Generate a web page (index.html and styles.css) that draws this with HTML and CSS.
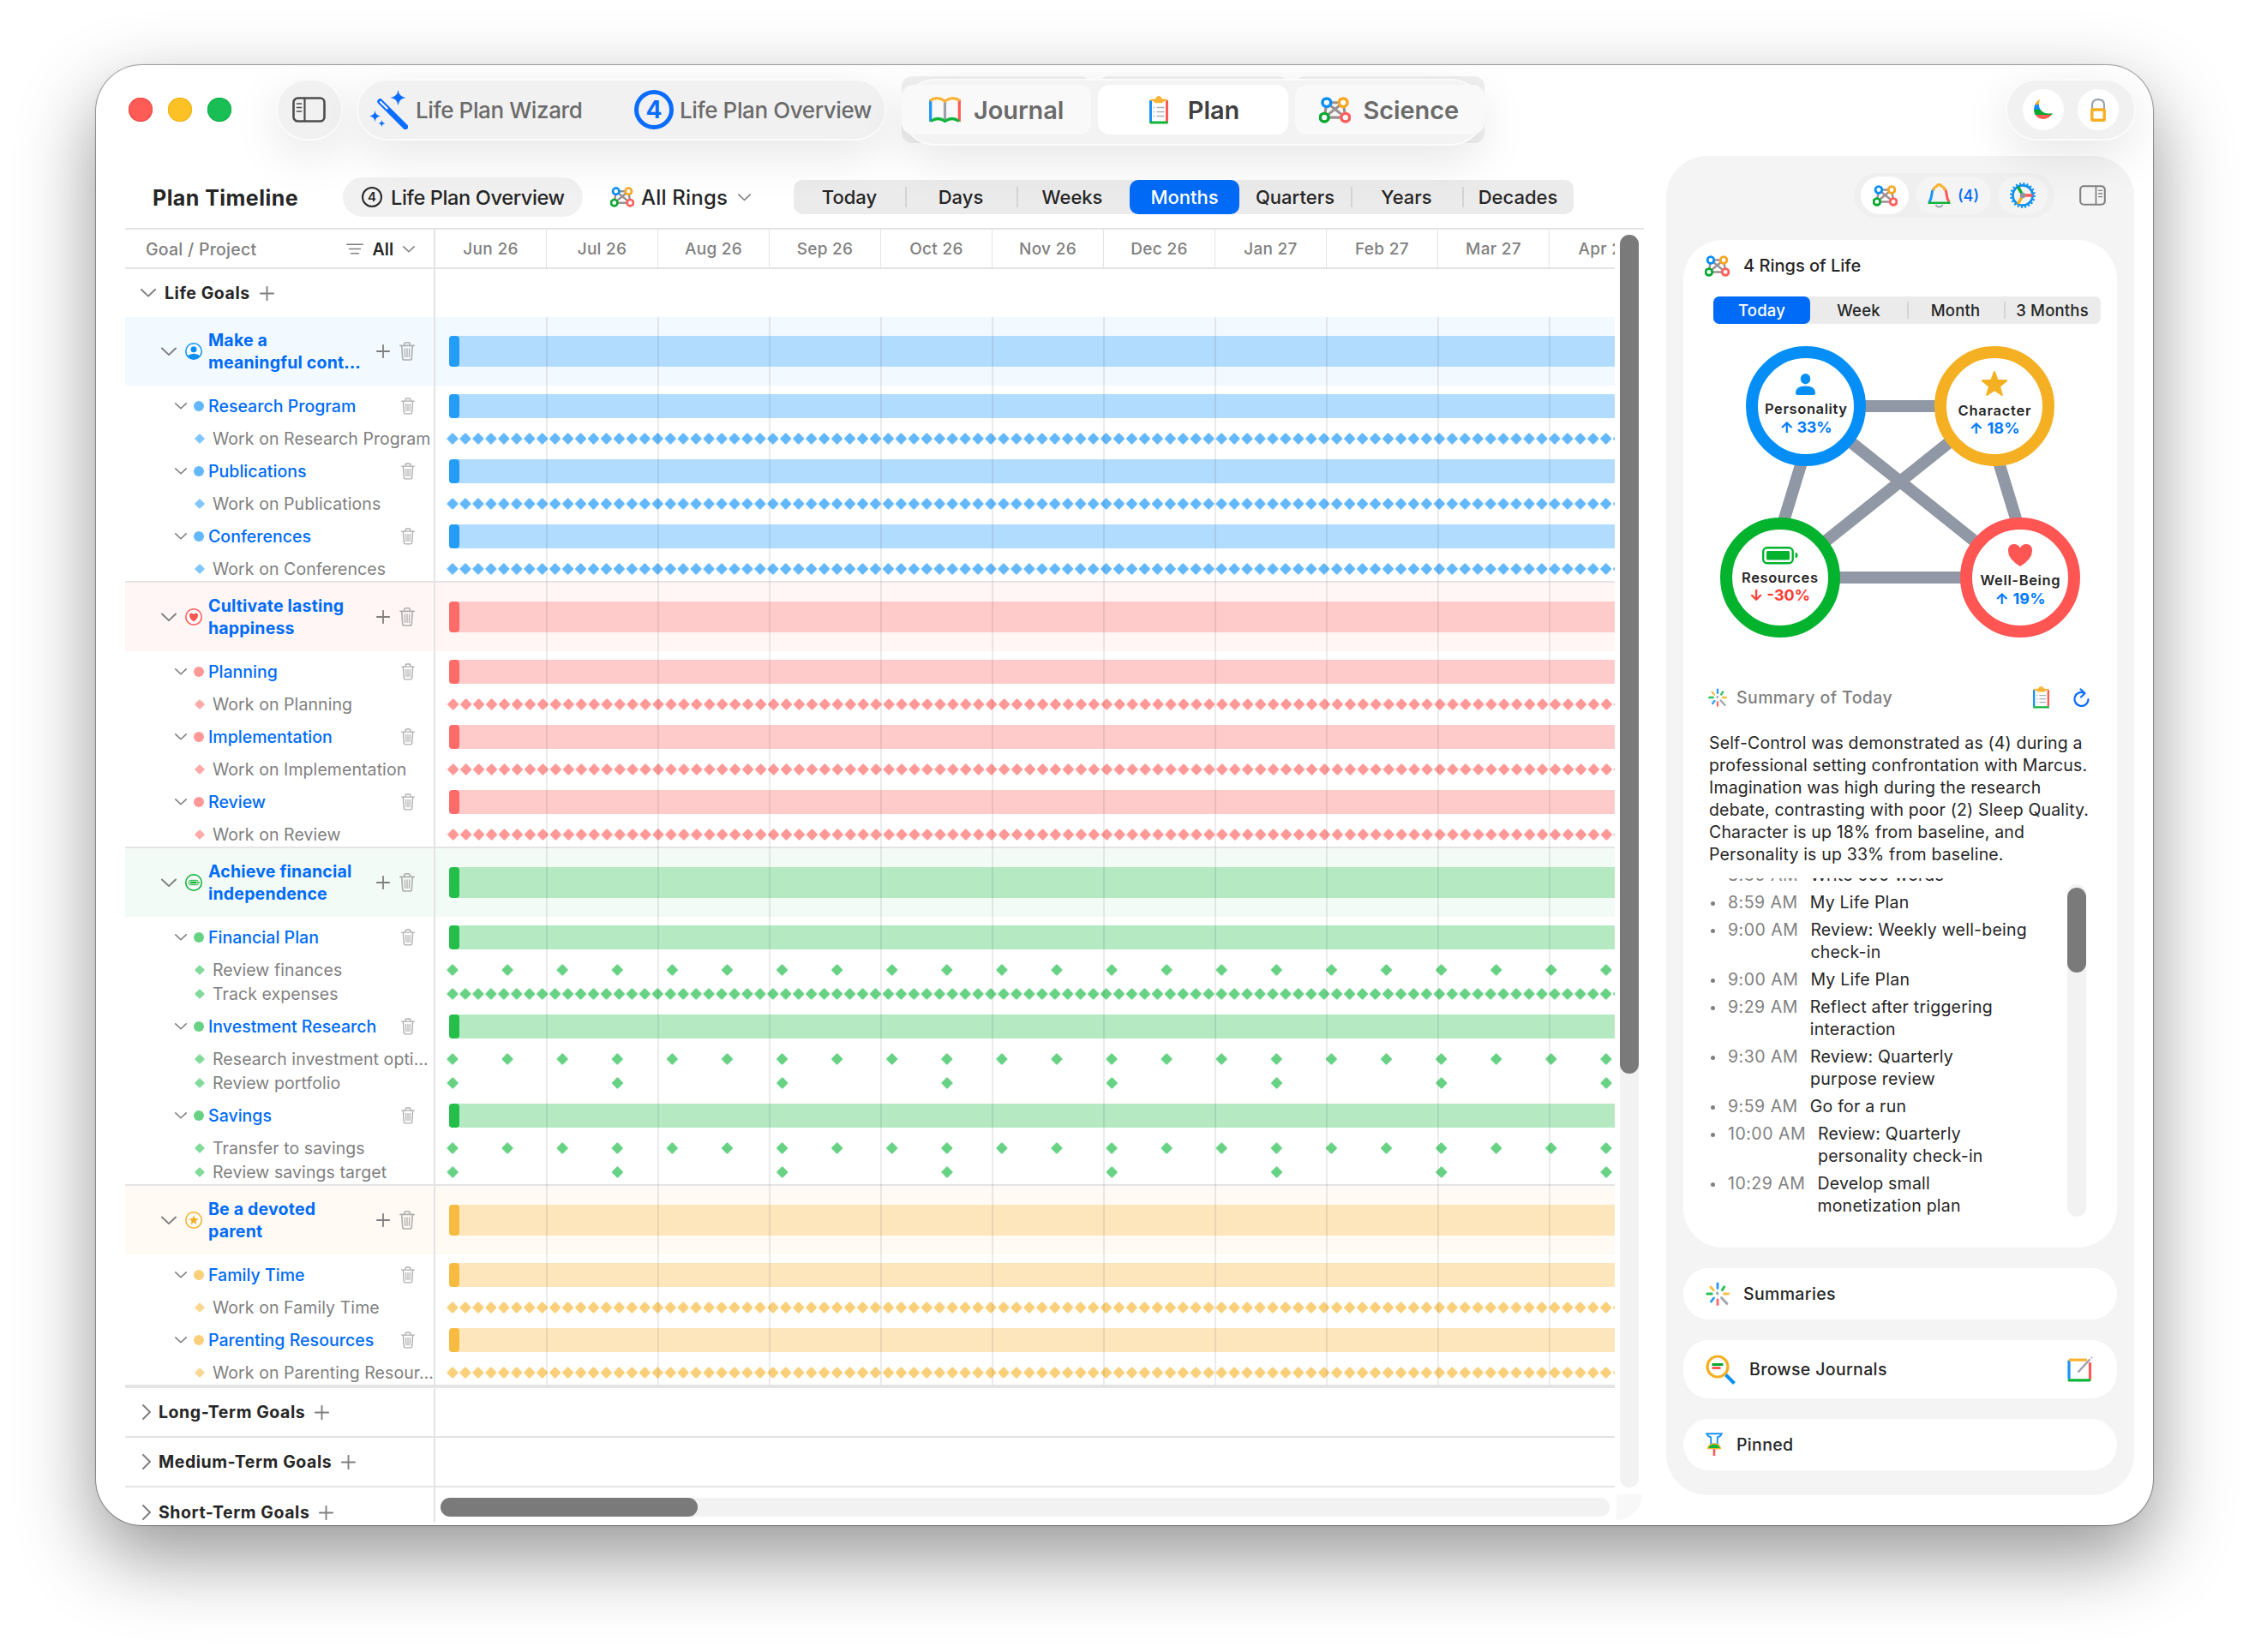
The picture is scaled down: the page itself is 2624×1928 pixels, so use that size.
FILE: index.html
```html
<!DOCTYPE html>
<html lang="en">
<head>
<meta charset="utf-8">
<title>Plan Timeline</title>
<link rel="stylesheet" href="styles.css">
</head>
<body>
<svg class="defs" width="0" height="0" aria-hidden="true">
  <defs>
    <symbol id="chev-down" viewBox="0 0 18 10"><path d="M1 1l8 7.6L17 1" fill="none" stroke="currentColor" stroke-width="2" stroke-linecap="round" stroke-linejoin="round"/></symbol>
    <symbol id="chev-right" viewBox="0 0 10 18"><path d="M1 1l8 8-8 8" fill="none" stroke="currentColor" stroke-width="2" stroke-linecap="round" stroke-linejoin="round"/></symbol>
    <symbol id="plus" viewBox="0 0 16 16"><path d="M8 .8v14.4M.8 8h14.4" fill="none" stroke="currentColor" stroke-width="1.8" stroke-linecap="round"/></symbol>
    <symbol id="trash" viewBox="0 0 18 22"><g fill="none" stroke="currentColor" stroke-width="1.6" stroke-linecap="round" stroke-linejoin="round"><path d="M.8 4.4h16.4M2.7 4.6l1 14.3q.1 2.1 2 2.1h6.6q1.9 0 2-2.1l1-14.3M5.7 4.2V2.6q0-1.8 1.8-1.8h3q1.8 0 1.8 1.8v1.6"/><path d="M6.3 8l.3 9.4M9 8v9.4M11.7 8l-.3 9.4" stroke-width="1.3"/></g></symbol>
    <symbol id="gem" viewBox="0 0 14 14"><rect x="2.700" y="2.700" width="8.600" height="8.600" rx="1" transform="rotate(45 7 7)" fill="currentColor"/></symbol>
    <symbol id="rings" viewBox="0 0 28 24">
      <path d="M6.7 5.2h14.6l2 13.5H4.7zL23.3 18.7M21.3 5.2L4.7 18.7" fill="none" stroke="#9c9092" stroke-width="2.4"/>
      <g fill="#fff" stroke-width="2.7"><circle cx="6.7" cy="5.2" r="3.7" stroke="#0c8ff2"/><circle cx="21.3" cy="5.2" r="3.7" stroke="#f5a623"/><circle cx="4.7" cy="18.7" r="3.7" stroke="#0aa832"/><circle cx="23.3" cy="18.7" r="3.7" stroke="#ff5f5c"/></g>
    </symbol>
    <symbol id="clipboard" viewBox="0 0 22 33">
      <path d="M1.5 5v25" stroke="#1b93f5" stroke-width="3"/><path d="M20.5 5v25" stroke="#ff5a56" stroke-width="3"/>
      <path d="M3 5h16v24H3z" fill="#fff"/>
      <path d="M1.4 30.9h19.2" stroke="#12b53c" stroke-width="3" stroke-linecap="round"/>
      <path d="M1 5.5Q1 3.6 3 3.6h4Q8.4 0 11 0t4 3.6h4q2 0 2 1.900l-4 .7q-1 2-3 2H8q-2 0-3-2z" fill="#f8b334"/>
      <path d="M4.7 13.5h1.6M8.5 13.5h9M4.7 18.5h1.6M8.5 18.5h9M4.7 23.5h1.6M8.5 23.5h9" stroke="#a9afb9" stroke-width="1.6"/>
    </symbol>
    <symbol id="spark" viewBox="0 0 28 28">
      <g stroke-width="2.9" stroke-linecap="round"><path d="M14 2v5.500" stroke="#2a9cf7"/><path d="M21.800 5.800l-2.500 3.800" stroke="#2dbf54"/><path d="M21.500 14h5" stroke="#f7bd45"/><path d="M18.500 18.500l6.500 7" stroke="#a0a5b0"/><path d="M14 21v5.500" stroke="#ff6d6a"/><path d="M9.500 19l-3 4" stroke="#2a9cf7"/><path d="M1.800 14h5.500" stroke="#2dbf54"/><path d="M6 6l3 3.700" stroke="#f7bd45"/><path d="M13.400 13l.6.800" stroke="#a0a5b0"/></g>
    </symbol>
    <symbol id="sidebar" viewBox="0 0 39 30"><rect x="1.500" y="1.500" width="36" height="27" rx="5" fill="none" stroke="currentColor" stroke-width="2.600"/><path d="M14.500 2v26" stroke="currentColor" stroke-width="2.200"/><path d="M5.500 8h5M5.500 12.500h5M5.500 17h5" stroke="currentColor" stroke-width="1.700" stroke-linecap="round"/></symbol>
    <pattern id="half-week-blue" x="12.520" y="0" width="14.952" height="28" patternUnits="userSpaceOnUse"><rect x="2.500" y="9" width="10" height="10" rx="1.200" transform="rotate(45 7.500 14)" fill="#63b8fb"/></pattern>
    <pattern id="half-week-red" x="13.220" y="0" width="14.952" height="28" patternUnits="userSpaceOnUse"><rect x="2.500" y="9" width="10" height="10" rx="1.200" transform="rotate(45 7.500 14)" fill="#ff9896"/></pattern>
    <pattern id="half-week-green" x="12.520" y="0" width="14.952" height="28" patternUnits="userSpaceOnUse"><rect x="2.500" y="9" width="10" height="10" rx="1.200" transform="rotate(45 7.500 14)" fill="#67d284"/></pattern>
    <pattern id="half-week-amber" x="12.520" y="0" width="14.952" height="28" patternUnits="userSpaceOnUse"><rect x="2.500" y="9" width="10" height="10" rx="1.200" transform="rotate(45 7.500 14)" fill="#f9cf79"/></pattern>
    <pattern id="half-month" x="12.500" y="0" width="64.090" height="28" patternUnits="userSpaceOnUse"><rect x="2.500" y="9" width="10" height="10" rx="1.200" transform="rotate(45 7.500 14)" fill="#67d284"/></pattern>
    <pattern id="six-weeks" x="12.700" y="0" width="192.270" height="28" patternUnits="userSpaceOnUse"><rect x="2.500" y="9" width="10" height="10" rx="1.200" transform="rotate(45 7.500 14)" fill="#67d284"/></pattern>
  </defs>
</svg>

<div class="window">
  <header class="toolbar">
    <div class="lights"><i class="close"></i><i class="min"></i><i class="max"></i></div>
    <button class="glass side-btn"><svg width="39" height="30"><use href="#sidebar"/></svg></button>
    <div class="glass plan-links">
      <a class="wizard"><svg width="45" height="46" viewBox="0 0 45 46" fill="#0b6dff"><path d="M12.500 13.500L42 43" stroke="#0b6dff" stroke-width="6.400" stroke-linecap="round"/><path d="M13 14l7.500 7.500" stroke="#f1f1f1" stroke-width="2.400" stroke-linecap="round"/><path d="M33.500 0q1 8 9 9-8 1-9 9-1-8-9-9 8-1 9-9zM6.500 24q.7 5.800 6.500 6.500-5.800.7-6.500 6.500Q5.800 31.200 0 30.500q5.800-.7 6.500-6.500zM14.500 35q.4 3.600 4 4-3.600.4-4 4-.4-3.600-4-4 3.600-.4 4-4z"/></svg><span>Life Plan Wizard</span></a>
      <a class="overview"><b>4</b><span>Life Plan Overview</span></a>
    </div>
    <nav class="tabs">
      <a class="tab journal"><svg width="37" height="31" viewBox="0 0 37 31" fill="none" stroke-width="3.200"><path d="M1.700 3.500V29" stroke="#1b93f5"/><path d="M35.300 3.500V29" stroke="#ff5a56"/><path d="M18.500 4v24" stroke="#9aa1ad"/><path d="M1 4.500Q5 1.700 9.500 1.700T18.500 5Q23 1.700 27.500 1.700T36 4.500" stroke="#f8b334"/><path d="M2 28.500q8.500-6 16.500 0 8.500-6 16.500 0" stroke="#12b53c"/></svg><span>Journal</span></a>
      <a class="tab on"><svg width="22" height="33"><use href="#clipboard"/></svg><span>Plan</span></a>
      <a class="tab science"><svg width="37" height="31" viewBox="0 0 28 24" preserveAspectRatio="none"><use href="#rings" width="28" height="24"/></svg><span>Science</span></a>
    </nav>
    <div class="glass corner-btns">
      <i class="disc"><svg width="22" height="24" viewBox="0 -2 22 24"><clipPath id="moon"><path d="M7-2Q4 6 8.500 11q5 5 13.500 3Q18 21 11 21 0 20 0 9 1 1 7-2z"/></clipPath><g clip-path="url(#moon)"><path d="M0-3h22v7H0z" fill="#f5a623"/><path d="M0 4h22v6H0z" fill="#0c8ff2"/><path d="M0 10h22v6H0z" fill="#0aa832"/><path d="M0 16h22v6H0z" fill="#ff5a56"/></g></svg></i>
      <i class="disc"><svg width="18" height="27" viewBox="0 0 18 27" fill="none"><path d="M2 12V7.500Q2 1.200 9 1.200t7 6.300V12" stroke="#9aa1ad" stroke-width="2.200"/><rect x="1.800" y="13" width="14.400" height="12.200" rx="1" stroke="#f5ae22" stroke-width="3.400"/></svg></i>
    </div>
  </header>

  <div class="main">
    <section class="plan">
      <div class="plan-head">
        <h1>Plan Timeline</h1>
        <button class="pill"><b>4</b><span>Life Plan Overview</span></button>
        <div class="ring-filter"><svg width="28" height="24"><use href="#rings"/></svg><span>All Rings</span><svg class="chev" width="15" height="9"><use href="#chev-down"/></svg></div>
        <div class="seg seg-lg"><span>Today</span><span>Days</span><span>Weeks</span><span class="on">Months</span><span>Quarters</span><span>Years</span><span>Decades</span></div>
      </div>

      <div class="chart">
        <div class="table">
          <div class="row head">
            <div class="label"><span class="col-name">Goal / Project</span><svg width="20" height="13" viewBox="0 0 20 13"><path d="M.8 1.200h18.400M3.600 6.500h12.800M5.600 11.800h8.800" stroke="#808080" stroke-width="1.600" stroke-linecap="round"/></svg><span class="all">All</span><svg class="chev" width="14" height="8"><use href="#chev-down"/></svg></div>
            <div class="months"><span>Jun 26</span><span>Jul 26</span><span>Aug 26</span><span>Sep 26</span><span>Oct 26</span><span>Nov 26</span><span>Dec 26</span><span>Jan 27</span><span>Feb 27</span><span>Mar 27</span><span>Apr 27</span></div>
          </div>
          <div class="row section"><div class="label"><svg class="chev" width="18" height="10"><use href="#chev-down"/></svg><span>Life Goals</span><svg class="plus" width="17" height="17"><use href="#plus"/></svg></div></div>

          <div class="life">
            <div class="group blue">
              <div class="row goal"><div class="label"><svg class="chev" width="18" height="11"><use href="#chev-down"/></svg><svg class="badge" width="20" height="20" viewBox="0 0 20 20"><circle cx="10" cy="10" r="9.200" fill="#fff" stroke="#0a8ff5" stroke-width="1.500"/><circle cx="10" cy="7.800" r="3.500" fill="#0a8ff5"/><path d="M2.500 15.500q3-2.700 7.500-2.700t7.500 2.700Q14.500 19.200 10 19.200t-7.500-3.700z" fill="#0a8ff5"/></svg><span class="name">Make a<br>meaningful cont…</span><svg class="plus" width="16" height="16"><use href="#plus"/></svg><svg class="trash" width="18" height="22"><use href="#trash"/></svg></div><div class="lane"><i class="bar"></i></div></div>
              <div class="row project"><div class="label"><svg class="chev" width="14" height="8"><use href="#chev-down"/></svg><i class="dot"></i><span class="name">Research Program</span><svg class="trash" width="16" height="20"><use href="#trash"/></svg></div><div class="lane"><i class="bar"></i></div></div>
              <div class="row task"><div class="label"><svg class="gem" width="14" height="14"><use href="#gem"/></svg><span>Work on Research Program</span></div><svg class="marks" width="1376" height="28"><rect x="12" width="1364" height="28" fill="url(#half-week-blue)"/></svg></div>
              <div class="row project"><div class="label"><svg class="chev" width="14" height="8"><use href="#chev-down"/></svg><i class="dot"></i><span class="name">Publications</span><svg class="trash" width="16" height="20"><use href="#trash"/></svg></div><div class="lane"><i class="bar"></i></div></div>
              <div class="row task"><div class="label"><svg class="gem" width="14" height="14"><use href="#gem"/></svg><span>Work on Publications</span></div><svg class="marks" width="1376" height="28"><rect x="12" width="1364" height="28" fill="url(#half-week-blue)"/></svg></div>
              <div class="row project"><div class="label"><svg class="chev" width="14" height="8"><use href="#chev-down"/></svg><i class="dot"></i><span class="name">Conferences</span><svg class="trash" width="16" height="20"><use href="#trash"/></svg></div><div class="lane"><i class="bar"></i></div></div>
              <div class="row task"><div class="label"><svg class="gem" width="14" height="14"><use href="#gem"/></svg><span>Work on Conferences</span></div><svg class="marks" width="1376" height="28"><rect x="12" width="1364" height="28" fill="url(#half-week-blue)"/></svg></div>
            </div>

            <div class="group red">
              <div class="row goal"><div class="label"><svg class="chev" width="18" height="11"><use href="#chev-down"/></svg><svg class="badge" width="20" height="20" viewBox="0 0 20 20"><circle cx="10" cy="10" r="9.200" fill="#fff" stroke="#ff5552" stroke-width="1.500"/><path d="M10 15.500Q5 12 5 8.500 5 5.600 7.500 5.600 9.200 5.600 10 7.200q.8-1.600 2.500-1.600 2.500 0 2.500 2.900 0 3.500-5 7z" fill="#ff5552"/></svg><span class="name">Cultivate lasting<br>happiness</span><svg class="plus" width="16" height="16"><use href="#plus"/></svg><svg class="trash" width="18" height="22"><use href="#trash"/></svg></div><div class="lane"><i class="bar"></i></div></div>
              <div class="row project"><div class="label"><svg class="chev" width="14" height="8"><use href="#chev-down"/></svg><i class="dot"></i><span class="name">Planning</span><svg class="trash" width="16" height="20"><use href="#trash"/></svg></div><div class="lane"><i class="bar"></i></div></div>
              <div class="row task"><div class="label"><svg class="gem" width="14" height="14"><use href="#gem"/></svg><span>Work on Planning</span></div><svg class="marks" width="1376" height="28"><rect x="12" width="1364" height="28" fill="url(#half-week-red)"/></svg></div>
              <div class="row project"><div class="label"><svg class="chev" width="14" height="8"><use href="#chev-down"/></svg><i class="dot"></i><span class="name">Implementation</span><svg class="trash" width="16" height="20"><use href="#trash"/></svg></div><div class="lane"><i class="bar"></i></div></div>
              <div class="row task"><div class="label"><svg class="gem" width="14" height="14"><use href="#gem"/></svg><span>Work on Implementation</span></div><svg class="marks" width="1376" height="28"><rect x="12" width="1364" height="28" fill="url(#half-week-red)"/></svg></div>
              <div class="row project"><div class="label"><svg class="chev" width="14" height="8"><use href="#chev-down"/></svg><i class="dot"></i><span class="name">Review</span><svg class="trash" width="16" height="20"><use href="#trash"/></svg></div><div class="lane"><i class="bar"></i></div></div>
              <div class="row task"><div class="label"><svg class="gem" width="14" height="14"><use href="#gem"/></svg><span>Work on Review</span></div><svg class="marks" width="1376" height="28"><rect x="12" width="1364" height="28" fill="url(#half-week-red)"/></svg></div>
            </div>

            <div class="group green">
              <div class="row goal"><div class="label"><svg class="chev" width="18" height="11"><use href="#chev-down"/></svg><svg class="badge" width="20" height="20" viewBox="0 0 20 20"><circle cx="10" cy="10" r="9.200" fill="#fff" stroke="#05b02e" stroke-width="1.500"/><rect x="4.500" y="7.300" width="10.500" height="5.400" rx="1.400" fill="none" stroke="#05b02e" stroke-width="1"/><path d="M6 8.700h7.500v2.600H6zM15.800 9h.9v2h-.9z" fill="#05b02e"/></svg><span class="name">Achieve financial<br>independence</span><svg class="plus" width="16" height="16"><use href="#plus"/></svg><svg class="trash" width="18" height="22"><use href="#trash"/></svg></div><div class="lane"><i class="bar"></i></div></div>
              <div class="row project"><div class="label"><svg class="chev" width="14" height="8"><use href="#chev-down"/></svg><i class="dot"></i><span class="name">Financial Plan</span><svg class="trash" width="16" height="20"><use href="#trash"/></svg></div><div class="lane"><i class="bar"></i></div></div>
              <div class="row task"><div class="label"><svg class="gem" width="14" height="14"><use href="#gem"/></svg><span>Review finances</span></div><svg class="marks" width="1376" height="28"><rect x="12" width="1364" height="28" fill="url(#half-month)"/></svg></div>
              <div class="row task"><div class="label"><svg class="gem" width="14" height="14"><use href="#gem"/></svg><span>Track expenses</span></div><svg class="marks" width="1376" height="28"><rect x="12" width="1364" height="28" fill="url(#half-week-green)"/></svg></div>
              <div class="row project"><div class="label"><svg class="chev" width="14" height="8"><use href="#chev-down"/></svg><i class="dot"></i><span class="name">Investment Research</span><svg class="trash" width="16" height="20"><use href="#trash"/></svg></div><div class="lane"><i class="bar"></i></div></div>
              <div class="row task"><div class="label"><svg class="gem" width="14" height="14"><use href="#gem"/></svg><span>Research investment opti…</span></div><svg class="marks" width="1376" height="28"><rect x="12" width="1364" height="28" fill="url(#half-month)"/></svg></div>
              <div class="row task"><div class="label"><svg class="gem" width="14" height="14"><use href="#gem"/></svg><span>Review portfolio</span></div><svg class="marks" width="1376" height="28"><rect x="12" width="1364" height="28" fill="url(#six-weeks)"/></svg></div>
              <div class="row project"><div class="label"><svg class="chev" width="14" height="8"><use href="#chev-down"/></svg><i class="dot"></i><span class="name">Savings</span><svg class="trash" width="16" height="20"><use href="#trash"/></svg></div><div class="lane"><i class="bar"></i></div></div>
              <div class="row task"><div class="label"><svg class="gem" width="14" height="14"><use href="#gem"/></svg><span>Transfer to savings</span></div><svg class="marks" width="1376" height="28"><rect x="12" width="1364" height="28" fill="url(#half-month)"/></svg></div>
              <div class="row task"><div class="label"><svg class="gem" width="14" height="14"><use href="#gem"/></svg><span>Review savings target</span></div><svg class="marks" width="1376" height="28"><rect x="12" width="1364" height="28" fill="url(#six-weeks)"/></svg></div>
            </div>

            <div class="group amber">
              <div class="row goal"><div class="label"><svg class="chev" width="18" height="11"><use href="#chev-down"/></svg><svg class="badge" width="20" height="20" viewBox="0 0 20 20"><circle cx="10" cy="10" r="9.200" fill="#fff" stroke="#f5ae22" stroke-width="1.500"/><path d="M10 4.200l1.500 3.900 4.200.2-3.300 2.600 1.200 4.100L10 12.700 6.400 15l1.200-4.100-3.300-2.600 4.200-.2z" fill="#f5ae22"/></svg><span class="name">Be a devoted<br>parent</span><svg class="plus" width="16" height="16"><use href="#plus"/></svg><svg class="trash" width="18" height="22"><use href="#trash"/></svg></div><div class="lane"><i class="bar"></i></div></div>
              <div class="row project"><div class="label"><svg class="chev" width="14" height="8"><use href="#chev-down"/></svg><i class="dot"></i><span class="name">Family Time</span><svg class="trash" width="16" height="20"><use href="#trash"/></svg></div><div class="lane"><i class="bar"></i></div></div>
              <div class="row task"><div class="label"><svg class="gem" width="14" height="14"><use href="#gem"/></svg><span>Work on Family Time</span></div><svg class="marks" width="1376" height="28"><rect x="12" width="1364" height="28" fill="url(#half-week-amber)"/></svg></div>
              <div class="row project"><div class="label"><svg class="chev" width="14" height="8"><use href="#chev-down"/></svg><i class="dot"></i><span class="name">Parenting Resources</span><svg class="trash" width="16" height="20"><use href="#trash"/></svg></div><div class="lane"><i class="bar"></i></div></div>
              <div class="row task"><div class="label"><svg class="gem" width="14" height="14"><use href="#gem"/></svg><span>Work on Parenting Resour…</span></div><svg class="marks" width="1376" height="28"><rect x="12" width="1364" height="28" fill="url(#half-week-amber)"/></svg></div>
            </div>
          </div>

          <div class="row section closed first"><div class="label"><svg class="chev" width="10" height="18"><use href="#chev-right"/></svg><span>Long-Term Goals</span><svg class="plus" width="17" height="17"><use href="#plus"/></svg></div></div>
          <div class="row section closed"><div class="label"><svg class="chev" width="10" height="18"><use href="#chev-right"/></svg><span>Medium-Term Goals</span><svg class="plus" width="17" height="17"><use href="#plus"/></svg></div></div>
          <div class="row section closed last"><div class="label"><svg class="chev" width="10" height="18"><use href="#chev-right"/></svg><span>Short-Term Goals</span><svg class="plus" width="17" height="17"><use href="#plus"/></svg></div></div>
          <div class="hscroll"><i></i></div>
        </div>
        <div class="vscroll"><i></i></div>
        <div class="scroll-corner"></div>
      </div>
    </section>

    <aside class="panel">
      <div class="panel-tools">
        <div class="modes">
          <i class="mode on"><svg width="29" height="25"><use href="#rings"/></svg></i>
          <i class="mode bell"><svg width="27" height="29" viewBox="0 0 27 29" fill="none" stroke-width="3"><path d="M9.500 25q.8 2.500 4 2.500t4-2.500" stroke="#9aa1ad" stroke-width="1.800"/><path d="M2 22Q4.500 17.500 5 12T8.500 6" stroke="#1b93f5"/><path d="M25 22Q22.500 17.500 22 12T18.500 6" stroke="#ff5a56"/><path d="M6.500 8.500q.8-4.500 4.200-5Q11 1.500 13.500 1.500t2.800 2q3.400.5 4.200 5" stroke="#f8b334"/><path d="M.5 22.700h26" stroke="#12b53c" stroke-width="2.600"/></svg><span>(4)</span></i>
          <i class="mode gear"><svg width="30" height="30" viewBox="0 0 30 30" fill="none"><circle cx="15" cy="15" r="13.600" stroke="#0c8ff2" stroke-width="2.600" stroke-dasharray="2 2.270"/><circle cx="15" cy="15" r="11.600" stroke="#0c8ff2" stroke-width="2.600"/><path d="M15 15L9.500 5" stroke="#0aa832" stroke-width="3.600"/><path d="M15 15h11.500" stroke="#ff5a56" stroke-width="3.600"/><path d="M15 15L9.500 25" stroke="#f5ae22" stroke-width="3.600"/><circle cx="15" cy="15" r="3.200" fill="#8d95a3"/></svg></i>
        </div>
        <svg class="panel-toggle" width="31" height="24"><use href="#sidebar"/></svg>
      </div>

      <section class="card rings-card">
        <h2 class="card-title"><svg width="29" height="25"><use href="#rings"/></svg><span>4 Rings of Life</span></h2>
        <div class="seg seg-sm"><span class="on">Today</span><span>Week</span><span>Month</span><span>3 Months</span></div>
        <svg class="diagram" width="506" height="416" viewBox="0 0 506 416">
          <path d="M143 96h220M113 296h280M158 96L97 296M348 96l61 200M143 96l250 200M363 96L113 296" class="links"/>
          <g fill="#fff" stroke-width="14"><circle cx="143" cy="96" r="63" stroke="#058ff6"/><circle cx="363" cy="96" r="63" stroke="#f4b022"/><circle cx="113" cy="296" r="63" stroke="#03b32e"/><circle cx="393" cy="296" r="63" stroke="#ff5553"/></g>
          <g fill="#058ff6"><ellipse cx="142.500" cy="64.200" rx="5.700" ry="6.200"/><path d="M131 80.500q0-8 11.500-8t11.500 8q0 2.500-2.500 2.500h-18q-2.500 0-2.500-2.500z"/></g>
          <path d="M363 56l3.700 9.800 10.500.5-8.200 6.600 2.800 10.100-8.800-5.800-8.800 5.800 2.800-10.100-8.200-6.600 10.500-.5z" fill="#f4b022" stroke="#f4b022" stroke-width="2" stroke-linejoin="round"/>
          <rect x="93.200" y="261.200" width="34.500" height="18" rx="4.500" fill="none" stroke="#03b32e" stroke-width="2.400"/><rect x="97" y="265" width="27" height="10.500" rx="1.500" fill="#03b32e"/><path d="M130.600 266.500q3 1 3 3.500t-3 3.500z" fill="#03b32e"/>
          <path d="M393 283q-14-8.500-14-18 0-8 7-8 4.800 0 7 4.500 2.200-4.500 7-4.500 7 0 7 8 0 9.500-14 18z" fill="#ff5553"/>
          <g class="ring-name"><text x="143" y="105" textLength="96">Personality</text><text x="363" y="106.700" textLength="85">Character</text><text x="112.500" y="302" textLength="89">Resources</text><text x="393" y="304.700" textLength="93">Well-Being</text></g>
          <g class="ring-pct"><text x="143" y="126.500" textLength="61">↑ 33%</text><text x="363" y="128.300" textLength="59">↑ 18%</text><text class="neg" x="112.500" y="323.300" textLength="71">↓ -30%</text><text x="393" y="326.500" textLength="59">↑ 19%</text></g>
        </svg>
        <div class="summary-head"><svg width="22" height="22"><use href="#spark"/></svg><span>Summary of Today</span><svg class="clip" width="19" height="26" viewBox="0 0 22 33" preserveAspectRatio="none"><use href="#clipboard" width="22" height="33"/></svg><svg class="redo" width="19" height="22" viewBox="0 0 19 22" fill="none" stroke="#0b6dff" stroke-width="2.200" stroke-linecap="round" stroke-linejoin="round"><path d="M13.500 6A8 8 0 1 0 17.500 13M8.500 1.500l5 4.500-4.500 4.500"/></svg></div>
        <p class="summary">Self-Control was demonstrated as (4) during a<br>professional setting confrontation with Marcus.<br>Imagination was high during the research<br>debate, contrasting with poor (2) Sleep Quality.<br>Character is up 18% from baseline, and<br>Personality is up 33% from baseline.</p>
        <div class="agenda">
          <ul>
            <li><time>8:30 AM</time><span>Write 500 words</span></li>
            <li><time>8:59 AM</time><span>My Life Plan</span></li>
            <li><time>9:00 AM</time><span>Review: Weekly well-being<br>check-in</span></li>
            <li><time>9:00 AM</time><span>My Life Plan</span></li>
            <li><time>9:29 AM</time><span>Reflect after triggering<br>interaction</span></li>
            <li><time>9:30 AM</time><span>Review: Quarterly<br>purpose review</span></li>
            <li><time>9:59 AM</time><span>Go for a run</span></li>
            <li><time>10:00 AM</time><span>Review: Quarterly<br>personality check-in</span></li>
            <li><time>10:29 AM</time><span>Develop small<br>monetization plan</span></li>
          </ul>
          <div class="agenda-scroll"><i></i></div>
        </div>
      </section>

      <section class="card strip"><svg width="28" height="28"><use href="#spark"/></svg><span>Summaries</span></section>
      <section class="card strip tall"><svg width="35" height="35" viewBox="0 0 35 35" fill="none"><circle cx="14" cy="14" r="12" stroke="#f4b022" stroke-width="3.200"/><path d="M23.500 23.500l10 10" stroke="#0c8ff2" stroke-width="4"/><path d="M7.500 11.500h13" stroke="#0aa832" stroke-width="3"/><path d="M7.500 15.500h10" stroke="#ff5a56" stroke-width="3"/></svg><span>Browse Journals</span><svg class="compose" width="30" height="30" viewBox="0 0 30 30" fill="none" stroke-width="3.200"><path d="M2 4.500v22" stroke="#1b93f5"/><path d="M2 4.200h21" stroke="#f8b334"/><path d="M26.500 7v20" stroke="#ff5a56"/><path d="M2 27.800h24" stroke="#12b53c" stroke-linecap="round"/><path d="M12.500 18.500L26.500 3.200" stroke="#9aa1ad" stroke-width="2.400"/><path d="M28 1.800l.8-.8" stroke="#9aa1ad" stroke-width="2.600"/></svg></section>
      <section class="card strip pin"><svg width="20" height="28" viewBox="0 0 20 28"><path d="M1.200 1.200h17.600q-1 3-5 4.300v8H6.200v-8q-4-1.300-5-4.300z" fill="#fff" stroke="#1b93f5" stroke-width="1.900"/><path d="M10 18v9" stroke="#ff5a56" stroke-width="2.600"/><path d="M2.500 18.700Q3.500 13 10 13t7.500 5.700z" fill="#12b53c" stroke="#f8b334" stroke-width="1.300"/></svg><span>Pinned</span></section>
    </aside>
  </div>
</div>
</body>
</html>
```

FILE: styles.css
```css
* { box-sizing: border-box; }

html, body { margin: 0; height: 1928px; overflow: hidden; }

body {
  padding: 76px 112px 0;
  background: #fff;
  color: #262626;
  font: 400 19.5px/26px Inter, "Noto Sans", "Liberation Sans", sans-serif;
}

svg { display: block; flex: none; }
i { display: block; font-style: normal; }
h1, h2, p, ul { margin: 0; padding: 0; }
button { border: 0; padding: 0; font: inherit; color: inherit; }
span, time { white-space: nowrap; }
.defs { position: absolute; }
.chev, .plus { color: #808080; }

.window {
  width: 2400px;
  height: 1704px;
  border-radius: 54px;
  background: #fff;
  overflow: hidden;
  display: flex;
  flex-direction: column;
  box-shadow: 0 0 0 1px rgba(0, 0, 0, .28), 0 0 3px rgba(0, 0, 0, .2), 0 36px 90px rgba(0, 0, 0, .42);
}

/* Toolbar */
.toolbar { display: flex; height: 106px; flex: none; padding: 16px 20px 0 38px; position: relative; z-index: 1; }
.lights { display: flex; gap: 18px; align-items: center; height: 72px; width: 172px; }
.lights i { width: 28px; height: 28px; border-radius: 50%; }
.close { background: #ff5c57; box-shadow: inset 0 0 0 1px #ee4540; }
.min { background: #fcc225; box-shadow: inset 0 0 0 1px #eeb010; }
.max { background: #19bf55; box-shadow: inset 0 0 0 1px #0cae44; }
.glass {
  height: 72px;
  border-radius: 36px;
  background: #f1f1f1;
  border: 2px solid #fbfbfb;
  box-shadow: 0 16px 56px rgba(0, 0, 0, .1);
  display: flex;
  align-items: center;
}
.side-btn { width: 78px; justify-content: center; padding-right: 2px; color: #4d4d4d; }
.plan-links { width: 618px; margin-left: 16px; color: #6b6b6b; font-size: 26px; font-weight: 500; }
.plan-links a { display: flex; align-items: center; }
.plan-links span { padding-top: 2px; letter-spacing: -.4px; }
.wizard { width: 322px; padding-left: 13px; gap: 9px; }
.overview { gap: 7px; }
.overview b { width: 46px; height: 46px; border: 5px solid #0b6dff; border-radius: 50%; color: #0b6dff; font: 700 28px/36px Inter, sans-serif; text-align: center; }
.tabs {
  display: flex;
  gap: 8px;
  width: 680px;
  height: 78px;
  margin-left: 18px;
  padding-top: 7px;
  border-radius: 39px;
  background: #f3f3f3;
  box-shadow: inset 0 0 0 2px #fbfbfb, 0 16px 56px rgba(0, 0, 0, .1);
}
.tab { position: relative; flex: 1; height: 58px; border-radius: 14px; background: #f9f9f9; display: flex; align-items: center; justify-content: center; gap: 15px; color: #6b6b6b; font-size: 29px; font-weight: 600; }
.tab::before { content: ""; position: absolute; inset: -10px 0; z-index: -1; border-radius: 12px; background: #f0f0f0; }
.tab.on { background: #fff; color: #404040; gap: 23px; }
.tab.on svg { margin-left: 3px; }
.tab span { padding-top: 1px; letter-spacing: -.1px; }
.science svg { margin-left: -2px; }
.corner-btns { margin-left: auto; width: 152px; padding-left: 18px; gap: 16px; }
.disc { width: 48px; height: 48px; border-radius: 50%; background: #fff; display: flex; align-items: center; justify-content: center; }

/* Plan column */
.main { display: flex; flex: 1; }
.plan { width: 1832px; padding: 12px 0 0 34px; }
.plan-head { display: flex; align-items: center; height: 72px; padding-left: 32px; }
.plan-head h1 { width: 222px; padding-top: 1px; font-size: 25px; font-weight: 700; letter-spacing: .45px; }
.pill { display: flex; align-items: center; width: 280px; height: 46px; padding-left: 22px; gap: 10px; border-radius: 23px; background: #f1f1f1; font-size: 23.5px; font-weight: 500; }
.pill b { width: 24px; height: 24px; border: 2px solid #262626; border-radius: 50%; font: 600 15px/20px Inter, sans-serif; text-align: center; }
.pill span { padding-top: 1px; letter-spacing: -.35px; }
.ring-filter { display: flex; align-items: center; gap: 8px; width: 214px; margin-left: 32px; font-size: 24px; font-weight: 500; }
.ring-filter span { padding-top: 1px; letter-spacing: .2px; }
.ring-filter .chev { margin-left: 4px; }

.seg { display: flex; background: #ebebeb; text-align: center; font-weight: 500; }
.seg span { flex: 1; position: relative; }
.seg span + span::before { content: ""; position: absolute; left: 0; width: 2px; background: #d4d4d4; }
.seg .on { background: #006bf7; color: #fff; }
.seg span.on::before, .seg .on + span::before { display: none; }
.seg-lg { width: 910px; height: 40px; border-radius: 10px; font-size: 22px; line-height: 41px; }
.seg-lg span::before { top: 8px; height: 24px; }
.seg-lg .on { flex: none; width: 128px; margin-left: 2px; border-radius: 10px; }

/* Timeline */
.chart { display: grid; grid-template-columns: 1738px 22px; column-gap: 6px; width: 1772px; height: 1514px; border-top: 2px solid #e4e4e4; position: relative; }
.table { position: relative; overflow: hidden; height: 1508px; }
.row { display: grid; grid-template-columns: 362px 1376px; }
.label { display: flex; align-items: center; border-right: 2px solid #e4e4e4; white-space: nowrap; }
.head { height: 46px; border-bottom: 2px solid #e4e4e4; color: #808080; font-weight: 500; }
.head .label { padding: 1px 22px 0 24px; }
.col-name { flex: 1; letter-spacing: .25px; }
.all { margin: 0 11px 0 11px; color: #262626; font-weight: 600; }
.months { display: flex; overflow: hidden; font-size: 19px; line-height: 45px; letter-spacing: .3px; }
.months span { flex: none; width: 130px; text-align: center; border-right: 1px solid #e4e4e4; }

.section { height: 56px; font-weight: 700; letter-spacing: .55px; }
.section .label { padding-left: 18px; gap: 10px; }
.section.closed { height: 58px; border-bottom: 2px solid #e4e4e4; }
.section.closed .label { padding-left: 20px; gap: 9px; }
.section .plus { margin-left: 1px; }
.section.closed .plus { margin-left: 2px; }
.section.last { border: 0; }

.life { position: relative; border-bottom: 4px solid #e4e4e4; }
.life::after {
  content: "";
  position: absolute;
  inset: 0 0 0 363px;
  background: repeating-linear-gradient(90deg, transparent 0 128px, rgba(0, 0, 0, .08) 128px 130px);
}
.group + .group { border-top: 2px solid #e4e4e4; }
.blue { --bar: #b2dcfe; --cap: #249df8; --dot: #63b8fb; --gem: #7fc7fc; --tint: #f2f9ff; }
.red { --bar: #ffcbca; --cap: #ff6b69; --dot: #ff9896; --gem: #ffaaa8; --tint: #fff6f5; }
.green { --bar: #b4e9c2; --cap: #24be4b; --dot: #67d284; --gem: #82da9b; --tint: #f2fbf5; }
.amber { --bar: #fde6bc; --cap: #f8bb42; --dot: #f9cf79; --gem: #fad894; --tint: #fffaf3; }

.goal { height: 80px; background: var(--tint); }
.goal .label { padding: 0 22px 0 42px; color: #006bf7; font-weight: 700; }
.goal .badge { margin: 0 7px 0 10px; }
.goal .name { flex: 1; letter-spacing: .2px; }
.goal .trash { margin-left: 11px; }
.trash { color: #aeaeae; }
.project { height: 48px; }
.project .label { padding: 0 22px 0 58px; color: #006bf7; font-weight: 500; }
.project .name { flex: 1; letter-spacing: .03px; }
.dot { width: 12px; height: 12px; border-radius: 50%; background: var(--dot); margin: 0 5px 0 8px; }
.task { height: 28px; }
.task .label { padding-left: 80px; color: #808080; letter-spacing: .08px; }
.gem { color: var(--gem); margin-right: 8px; }
.lane { display: flex; align-items: center; padding-left: 16px; }
.bar { flex: 1; height: 28px; border-radius: 4px 0 0 4px; background: var(--bar); }
.goal .bar { height: 36px; }
.bar::before { content: ""; display: block; width: 12px; height: 100%; border-radius: 4px; background: var(--cap); }

.hscroll { position: absolute; left: 368px; top: 1480px; width: 1364px; height: 22px; border-radius: 11px; background: #f2f2f2; }
.hscroll i { width: 300px; height: 22px; border-radius: 11px; background: #7a7a7a; }
.vscroll { height: 1462px; margin-top: 6px; border-radius: 11px; background: #f2f2f2; }
.vscroll i { height: 979px; border-radius: 11px; background: #7a7a7a; }
.scroll-corner { position: absolute; left: 1740px; top: 1476px; width: 30px; height: 30px; border-radius: 0 0 30px 0; background: #f8f8f8; }

/* Right panel */
.panel { width: 546px; height: 1563px; padding: 20px; border-radius: 48px; background: #f4f4f4; }
.panel-tools { display: flex; align-items: center; justify-content: flex-end; height: 52px; padding-right: 13px; }
.modes { display: flex; gap: 8px; align-items: center; width: 234px; height: 52px; padding-left: 8px; border-radius: 26px; background: #efefef; }
.mode { display: flex; align-items: center; justify-content: center; width: 56px; height: 44px; border-radius: 22px; background: #f4f4f4; }
.mode.on { background: #fff; }
.mode.bell { width: 88px; gap: 8px; color: #006bf7; font-size: 18px; font-weight: 500; }
.mode.bell span { padding-top: 2px; }
.mode.gear { width: 58px; }
.panel-toggle { margin-left: 29px; color: #808080; transform: scaleX(-1); }

.card { background: #fff; }
.rings-card { height: 1176px; margin-top: 26px; border-radius: 46px; }
.card-title { display: flex; align-items: center; height: 66px; padding: 0 0 6px 25px; gap: 16px; font-size: 20px; font-weight: 500; }
.seg-sm { width: 452px; height: 32px; margin-left: 35px; border-radius: 7px; font-size: 18.5px; line-height: 33px; letter-spacing: .2px; }
.seg-sm span::before { top: 6px; height: 20px; }
.seg-sm .on { border-radius: 7px; }
.links { fill: none; stroke: #9198a5; stroke-width: 14; }
.ring-name { font-size: 16.5px; font-weight: 600; fill: #262626; text-anchor: middle; }
.ring-pct { font-size: 18px; font-weight: 700; fill: #007aff; text-anchor: middle; }
.ring-pct .neg { fill: #ff3b30; }

.summary-head { display: flex; align-items: center; height: 40px; padding: 0 32px 0 29px; color: #808080; font-weight: 500; letter-spacing: .4px; }
.summary-head span { flex: 1; margin-left: 11px; }
.summary-head .clip { margin-right: 28px; }
.summary { margin: 20px 0 0 30px; letter-spacing: .17px; white-space: nowrap; }
.agenda { display: flex; justify-content: space-between; height: 403px; margin: 15px 36px 0 29px; overflow: hidden; letter-spacing: .23px; }
.agenda ul { list-style: none; margin-top: -17px; }
.agenda li { display: flex; margin-bottom: 6px; }
.agenda li::before { content: ""; width: 5px; height: 5px; margin: 12px 15px 0 3px; border-radius: 50%; background: #808080; }
.agenda time { margin-right: 14px; color: #808080; letter-spacing: .5px; }
.agenda-scroll { width: 22px; height: 388px; margin-top: 7px; border-radius: 11px; background: #f2f2f2; padding-top: 4px; }
.agenda-scroll i { height: 99px; border-radius: 11px; background: #7a7a7a; }

.strip { display: flex; align-items: center; height: 60px; margin-top: 24px; padding: 0 28px 0 26px; gap: 16px; border-radius: 30px; font-weight: 500; letter-spacing: .35px; }
.strip.tall { height: 68px; }
.strip .compose { margin-left: auto; }
```
